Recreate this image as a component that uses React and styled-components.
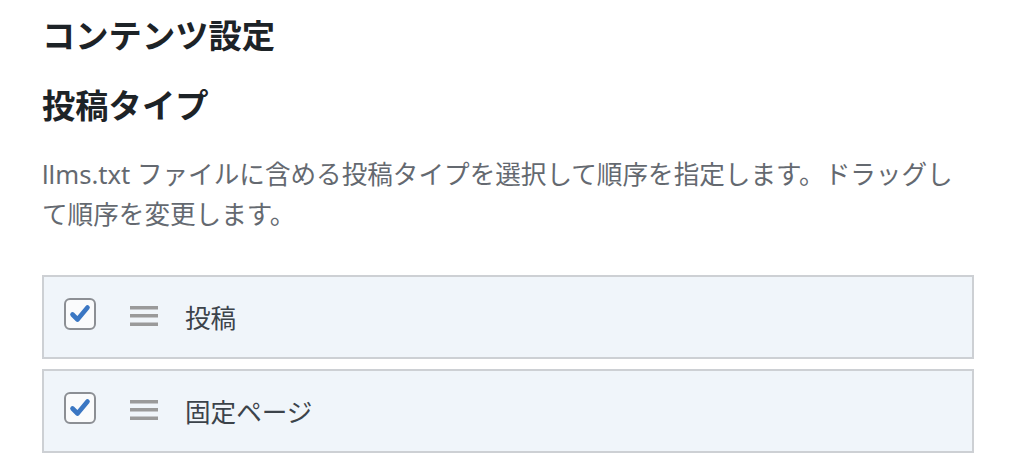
import styled, { createGlobalStyle } from "styled-components";

const GlobalStyle = createGlobalStyle`
  body {
    margin: 0;
    background: #fff;
    font-family: "Noto Sans", "Noto Sans CJK JP", sans-serif;
  }
`;

const Page = styled.div`
  padding: 14px 46px 0 42px;
`;

const Title = styled.h1`
  margin: 0;
  font-size: 33.3px;
  line-height: 42px;
  font-weight: 700;
  color: #1d2327;
`;

const SubTitle = styled.h2`
  margin: 28px 0 0;
  font-size: 33.3px;
  line-height: 42px;
  font-weight: 700;
  color: #1d2327;
`;

const Description = styled.p`
  margin: 29px 0 0;
  font-size: 25.6px;
  line-height: 40px;
  color: #646970;
`;

const List = styled.ul`
  list-style: none;
  margin: 40px 0 0;
  padding: 0;
  display: flex;
  flex-direction: column;
  gap: 10px;
`;

const Row = styled.li`
  display: flex;
  align-items: center;
  height: 84px;
  box-sizing: border-box;
  padding: 0 20px;
  background: #f0f5fa;
  border: 2px solid #cdd0d4;
`;

const Check = styled.span`
  width: 32px;
  height: 32px;
  margin-bottom: 7px;
  box-sizing: border-box;
  border: 2px solid #8c8f94;
  border-radius: 6px;
  background: #fafbfc;
  display: flex;
  align-items: center;
  justify-content: center;
`;

const Handle = styled.span`
  display: flex;
  margin-left: 34px;
  margin-bottom: 2px;
  cursor: move;
`;

const Label = styled.span`
  margin-left: 27px;
  font-size: 25.6px;
  color: #3c434a;
`;

const CheckMark = () => (
  <svg width="24" height="24" viewBox="0 0 24 24">
    <path
      d="M4.5 12.5 L9.5 17.5 L19.5 5.5"
      fill="none"
      stroke="#3b77c3"
      strokeWidth="4.6"
      strokeLinecap="round"
      strokeLinejoin="round"
    />
  </svg>
);

const MenuIcon = () => (
  <svg width="28" height="20" viewBox="0 0 28 20">
    <rect x="0" y="0" width="28" height="3.5" fill="#9a9a9a" />
    <rect x="0" y="8" width="28" height="3.5" fill="#9a9a9a" />
    <rect x="0" y="16.5" width="28" height="3.5" fill="#9a9a9a" />
  </svg>
);

const postTypes = ["投稿", "固定ページ"];

export default function App() {
  return (
    <>
      <GlobalStyle />
      <Page>
        <Title>コンテンツ設定</Title>
        <SubTitle>投稿タイプ</SubTitle>
        <Description>
          llms.txt ファイルに含める投稿タイプを選択して順序を指定します。ドラッグして順序を変更します。
        </Description>
        <List>
          {postTypes.map((type) => (
            <Row key={type}>
              <Check>
                <CheckMark />
              </Check>
              <Handle>
                <MenuIcon />
              </Handle>
              <Label>{type}</Label>
            </Row>
          ))}
        </List>
      </Page>
    </>
  );
}
